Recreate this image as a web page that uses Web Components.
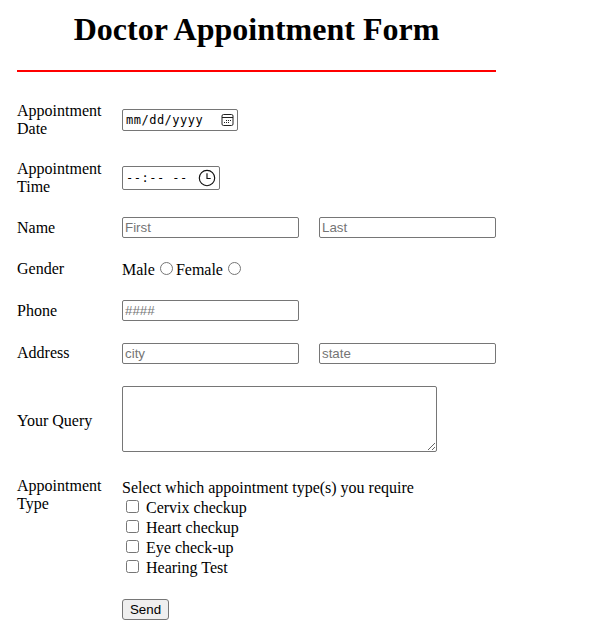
<!DOCTYPE html>
<html lang="en">
<head>
<meta charset="utf-8">
<title>Doctor Appointment Form</title>
<style>
html { overflow: hidden; }
body { margin: 0; background: #fff; color: #000; font: 16px/18px "Liberation Serif", serif; }
</style>
</head>
<body>
<appointment-form></appointment-form>
<script>
const define = (name, html) => {
  const template = document.createElement('template');
  template.innerHTML = html;
  customElements.define(name, class extends HTMLElement {
    constructor() {
      super();
      this.attachShadow({ mode: 'open' }).append(template.content.cloneNode(true));
    }
    connectedCallback() {
      const input = this.shadowRoot.querySelector('[data-hint]');
      if (input) input.placeholder = this.getAttribute('hint') || '';
    }
  });
};

define('form-title', `
<style>
:host { display: block; height: 70px; border-bottom: 2px solid #f00; }
h1 { margin: 0; padding-top: 11px; font-size: 32px; line-height: 37px; text-align: center; }
</style><h1><slot></slot></h1>`);

define('form-row', `
<style>
:host { display: grid; grid-template-columns: 85px 1fr; column-gap: 20px; align-items: center; }
.label { padding: var(--label-shift, 0px) 0 var(--label-lift, 0px); align-self: var(--label-align, center); }
.fields { display: flex; align-items: center; gap: 20px; }
</style><div class="label"><slot name="label"></slot></div><div class="fields"><slot></slot></div>`);

define('text-field', `
<style>
:host { display: block; width: 177px; height: 21px; }
input { display: block; box-sizing: border-box; width: 100%; height: 100%; margin: 0; padding: 1px 2px;
  border: 1px solid #767676; border-radius: 2px; background: #fff; font: 13.333px "Liberation Sans", sans-serif; outline: 0; }
input::placeholder { color: #757575; opacity: 1; }
</style><input data-hint type="text">`);

define('picker-field', `
<style>
:host { display: flex; box-sizing: border-box; align-items: center; justify-content: space-between;
  border: 1px solid #767676; border-radius: 2px; padding: 0 3px;
  font: 12px/18px "DejaVu Sans Mono", monospace; letter-spacing: .5px; white-space: pre; }
</style><span><slot></slot></span><slot name="icon"></slot>`);

define('radio-choice', `
<style>
:host { display: flex; align-items: center; padding-top: 1px; }
i { box-sizing: border-box; width: 13px; height: 13px; margin: 0 3px 2px 5px; border: 1px solid #767676; border-radius: 50%; }
</style><slot></slot><i></i>`);

define('check-choice', `
<style>
:host { display: flex; height: 20px; line-height: 20px; align-items: flex-start; }
i { box-sizing: border-box; width: 13px; height: 13px; margin: 2px 7px 0 4px; border: 1px solid #767676; border-radius: 2.5px; }
</style><i></i><slot></slot>`);

define('query-field', `
<style>
:host { display: block; width: 315px; height: 66px; }
textarea { display: block; box-sizing: border-box; width: 100%; height: 100%; margin: 0; border: 1px solid #767676;
  border-radius: 2px; background: #fff; resize: both; }
</style><textarea></textarea>`);

define('send-button', `
<style>
:host { display: block; width: 47px; height: 21px; }
button { display: block; box-sizing: border-box; width: 100%; height: 100%; margin: 0; padding: 0; border: 1px solid #767676;
  border-radius: 3px; background: #efefef; color: #000; font: 13.333px "Liberation Sans", sans-serif; }
</style><button><slot></slot></button>`);

define('appointment-form', `
<style>
:host { display: block; width: 479px; margin-left: 17px; }
form-row { height: 21px; }
.date { height: 36px; margin-top: 30px; }
.time { height: 36px; margin-top: 22px; }
.name { margin-top: 21px; }
.gender { height: 20px; margin-top: 21px; }
.gender radio-choice + radio-choice { margin-left: -20px; }
.phone { margin-top: 21px; }
.address, .send { margin-top: 22px; }
.address { --label-lift: 1px; }
.query { height: 66px; margin-top: 22px; --label-shift: 4px; }
.type { height: 100px; margin-top: 25px; --label-align: start; }
.choices { height: 99px; padding-top: 1px; line-height: 20px; }
.date picker-field { width: 116px; height: 22px; }
.time picker-field { width: 98px; height: 24px; }
svg { display: block; flex: none; }
</style>
<form-title>Doctor Appointment Form</form-title>
<form-row class="date"><span slot="label">Appointment Date</span>
  <picker-field>mm/dd/yyyy<svg slot="icon" width="13" height="14" viewBox="0 0 13 14" fill="none" stroke="#222"><rect x="1" y="1.5" width="11" height="11" rx="1.5"/><path d="M1 4.5h11"/><path d="M5 7.5h1M7 7.5h1M9 7.5h1M3 9.5h1M5 9.5h1M7 9.5h1"/></svg></picker-field>
</form-row>
<form-row class="time"><span slot="label">Appointment Time</span>
  <picker-field>--:-- --<svg slot="icon" width="18" height="18" viewBox="0 0 18 18" fill="none" stroke="#111" stroke-width="1.15"><circle cx="9" cy="9" r="7.7"/><path d="M9 4.2v5.3h3.7"/></svg></picker-field>
</form-row>
<form-row class="name"><span slot="label">Name</span><text-field hint="First"></text-field><text-field hint="Last"></text-field></form-row>
<form-row class="gender"><span slot="label">Gender</span><radio-choice>Male</radio-choice><radio-choice>Female</radio-choice></form-row>
<form-row class="phone"><span slot="label">Phone</span><text-field hint="####"></text-field></form-row>
<form-row class="address"><span slot="label">Address</span><text-field hint="city"></text-field><text-field hint="state"></text-field></form-row>
<form-row class="query"><span slot="label">Your Query</span><query-field></query-field></form-row>
<form-row class="type"><span slot="label">Appointment Type</span>
  <div class="choices">Select which appointment type(s) you require
    <check-choice>Cervix checkup</check-choice><check-choice>Heart checkup</check-choice><check-choice>Eye check-up</check-choice><check-choice>Hearing Test</check-choice>
  </div></form-row>
<form-row class="send"><send-button>Send</send-button></form-row>`);
</script>
</body>
</html>
